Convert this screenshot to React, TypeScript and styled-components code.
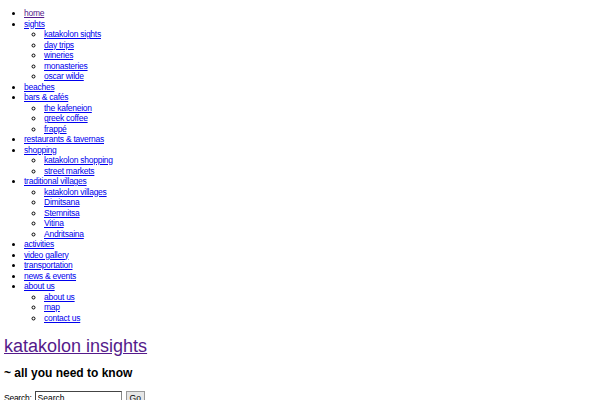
import React from 'react';
import styled, {createGlobalStyle} from 'styled-components';

const GlobalStyle = createGlobalStyle`
    body {
        margin: 0;
        padding: 4px;
        background: #fff;
        font-family: "Liberation Sans", Arial, sans-serif;
        font-size: 8.5px;
        letter-spacing: -0.25px;
        color: #000;
    }
`;

const Menu = styled.ul<{ nested?: boolean }>`
    margin: ${({nested}) => (nested ? '0' : '4px 0 0')};
    padding-left: 20px;
    list-style-type: ${({nested}) => (nested ? 'circle' : 'disc')};
`;

const Item = styled.li`
    line-height: 10.5px;
`;

const MenuLink = styled.a<{ visited?: boolean }>`
    color: ${({visited}) => (visited ? '#551a8b' : '#0000ee')};
    text-decoration: underline;
`;

const Title = styled.h1`
    margin: 12px 0 0;
    font-size: 18px;
    font-weight: normal;
    letter-spacing: 0;
    line-height: 22px;
`;

const TitleLink = styled.a`
    color: #551a8b;
    text-decoration: underline;
`;

const Tagline = styled.h2`
    margin: 9px 0 0;
    font-size: 12px;
    font-weight: bold;
    letter-spacing: 0;
    line-height: 15px;
`;

const SearchForm = styled.form`
    display: flex;
    align-items: center;
    gap: 3px;
    margin-top: 10px;
`;

const SearchInput = styled.input`
    box-sizing: border-box;
    width: 87px;
    height: 14px;
    padding: 1px 2px;
    border: 1px solid #888;
    border-top-color: #444;
    border-left-color: #444;
    font: inherit;
`;

const GoButton = styled.button`
    box-sizing: border-box;
    margin-left: 1px;
    height: 14px;
    padding: 0 3px;
    font: inherit;
    border: 1px solid #999;
    background: #e6e6e6;
`;

interface MenuEntry {
    label: string;
    visited?: boolean;
    children?: string[];
}

const menu: MenuEntry[] = [
    {label: 'home', visited: true},
    {label: 'sights', children: ['katakolon sights', 'day trips', 'wineries', 'monasteries', 'oscar wilde']},
    {label: 'beaches'},
    {label: 'bars & cafés', children: ['the kafeneion', 'greek coffee', 'frappé']},
    {label: 'restaurants & tavernas'},
    {label: 'shopping', children: ['katakolon shopping', 'street markets']},
    {label: 'traditional villages', children: ['katakolon villages', 'Dimitsana', 'Stemnitsa', 'Vitina', 'Andritsaina']},
    {label: 'activities'},
    {label: 'video gallery'},
    {label: 'transportation'},
    {label: 'news & events'},
    {label: 'about us', children: ['about us', 'map', 'contact us']},
];

const App: React.FC = () => {
    return (
        <>
            <GlobalStyle />
            <Menu>
                {menu.map((entry) => (
                    <Item key={entry.label}>
                        <MenuLink href="#" visited={entry.visited}>{entry.label}</MenuLink>
                        {entry.children && (
                            <Menu nested>
                                {entry.children.map((child) => (
                                    <Item key={child}>
                                        <MenuLink href="#">{child}</MenuLink>
                                    </Item>
                                ))}
                            </Menu>
                        )}
                    </Item>
                ))}
            </Menu>
            <Title>
                <TitleLink href="#">katakolon insights</TitleLink>
            </Title>
            <Tagline>~ all you need to know</Tagline>
            <SearchForm onSubmit={(e) => e.preventDefault()}>
                <label htmlFor="s">Search:</label>
                <SearchInput id="s" defaultValue="Search" />
                <GoButton type="submit">Go</GoButton>
            </SearchForm>
        </>
    );
};

export default App;
